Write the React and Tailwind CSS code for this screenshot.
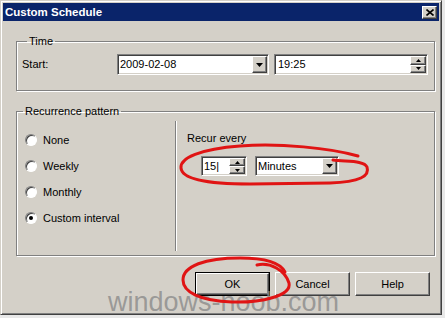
import React from 'react';

const raised = "border border-t-white border-l-white border-r-[#404040] border-b-[#404040] shadow-[inset_-1px_-1px_0_#808080]";
const sunken = "border border-t-[#808080] border-l-[#808080] border-r-white border-b-white shadow-[inset_1px_1px_0_#404040,inset_-1px_-1px_0_#d4d0c8]";
const etched = "border border-[#808080] shadow-[1px_1px_0_#fff,inset_1px_1px_0_#fff]";

const DownArrow = () => (
    <svg width="7" height="4" viewBox="0 0 7 4"><path d="M0 0h7L3.5 4z" fill="#000" /></svg>
);

const Spin = () => (
    <div className="flex flex-col w-[16px] h-full">
        <div className={`flex-1 flex items-center justify-center bg-[#d4d0c8] ${raised}`}>
            <svg width="5" height="3" viewBox="0 0 5 3"><path d="M2.5 0L5 3H0z" fill="#000" /></svg>
        </div>
        <div className={`flex-1 flex items-center justify-center bg-[#d4d0c8] ${raised}`}>
            <svg width="5" height="3" viewBox="0 0 5 3"><path d="M0 0h5L2.5 3z" fill="#000" /></svg>
        </div>
    </div>
);

const Combo = ({ value, className }) => (
    <div className={`flex bg-white p-px ${sunken} ${className}`}>
        <span className="flex-1 flex items-center pl-px">{value}</span>
        <div className={`w-[15px] h-full flex items-center justify-center bg-[#d4d0c8] ${raised}`}>
            <DownArrow />
        </div>
    </div>
);

const Radio = ({ label, checked }) => (
    <div className="h-[26px] flex items-center">
        <div className="w-[12px] h-[12px] rounded-full bg-white border border-t-[#808080] border-l-[#808080] border-r-white border-b-white shadow-[inset_1px_1px_0_#404040] flex items-center justify-center">
            {checked && <div className="w-[4px] h-[4px] rounded-full bg-black" />}
        </div>
        <span className="ml-[6px]">{label}</span>
    </div>
);

export default function App() {
    return (
        <div className="relative w-[445px] h-[318px] overflow-hidden bg-[#e8e8e8] font-['Liberation_Sans',Arial,sans-serif] text-[11px] leading-[13px] text-black">
            {/* Window */}
            <div className="w-[442px] h-[315px] bg-[#d4d0c8] border border-t-[#d4d0c8] border-l-[#d4d0c8] border-r-[#404040] border-b-[#404040] shadow-[inset_1px_1px_0_#fff,inset_-1px_-1px_0_#808080] p-[2px]">
                {/* Title bar */}
                <div className="h-[18px] bg-[#0a246a] flex items-center justify-between pl-[2px] pr-[2px]">
                    <span className="text-white font-bold text-[11.5px]">Custom Schedule</span>
                    <div className={`w-[15px] h-[13px] bg-[#d4d0c8] flex items-center justify-center ${raised}`}>
                        <svg width="8" height="7" viewBox="0 0 8 7">
                            <path d="M0.5 0.5L7.5 6.5M7.5 0.5L0.5 6.5" stroke="#000" strokeWidth="1.6" />
                        </svg>
                    </div>
                </div>

                {/* Time */}
                <fieldset className={`ml-[13px] mt-[14px] w-[419px] pl-[5px] pt-[6px] pb-[15px] ${etched}`}>
                    <legend className="ml-[5px] px-[2px]">Time</legend>
                    <div className="flex items-center">
                        <span className="w-[95px]">Start:</span>
                        <Combo value="2009-02-08" className="w-[152px] h-[21px]" />
                        <div className={`ml-[5px] w-[154px] h-[21px] flex bg-white p-px ${sunken}`}>
                            <span className="flex-1 flex items-center pl-[2px]">19:25</span>
                            <Spin />
                        </div>
                    </div>
                </fieldset>

                {/* Recurrence pattern */}
                <fieldset className={`ml-[13px] mt-[14px] w-[419px] pt-[3px] pb-[4px] ${etched}`}>
                    <legend className="ml-[6px] px-[2px]">Recurrence pattern</legend>
                    <div className="flex h-[130px]">
                        <div className="w-[158px] pl-[8px] pt-[6px]">
                            <Radio label="None" />
                            <Radio label="Weekly" />
                            <Radio label="Monthly" />
                            <Radio label="Custom interval" checked />
                        </div>
                        <div className="w-[2px] h-full border-l border-l-[#808080] border-r border-r-white" />
                        <div className="pl-[10px] pt-[11px]">
                            <p>Recur every</p>
                            <div className="flex mt-[11px] ml-[14px]">
                                <div className={`w-[46px] h-[20px] flex bg-white p-px ${sunken}`}>
                                    <span className="flex-1 flex items-center pl-px">15|</span>
                                    <Spin />
                                </div>
                                <Combo value="Minutes" className="ml-[8px] w-[84px] h-[20px]" />
                            </div>
                        </div>
                    </div>
                </fieldset>

                {/* Buttons */}
                <div className="flex justify-end gap-[5px] mt-[16px] pr-[9px]">
                    <button className="w-[75px] h-[24px] border border-black bg-[#d4d0c8]">
                        <div className={`w-full h-full flex items-center justify-center ${raised}`}>OK</div>
                    </button>
                    <button className={`w-[75px] h-[24px] bg-[#d4d0c8] ${raised}`}>Cancel</button>
                    <button className={`w-[75px] h-[24px] bg-[#d4d0c8] ${raised}`}>Help</button>
                </div>
            </div>

            {/* Watermark */}
            <div className="absolute left-[108px] top-[289px] text-[27px] leading-[27px] text-[#8a8a8a]/80 whitespace-nowrap pointer-events-none">
                windows-noob.com
            </div>

            {/* Red pen marks */}
            <svg className="absolute inset-0 pointer-events-none" width="445" height="318" viewBox="0 0 445 318">
                <path
                    d="M358 156 C330 148 280 143 240 146 C200 149 180 158 181 168 C182 180 210 184 250 184 L330 183 C360 182 370 176 367 167 C364 160 345 162 333 160"
                    fill="none" stroke="#e01414" strokeWidth="3" strokeLinecap="round"
                />
                <path
                    d="M257 265 C270 262 285 270 289 283 C292 296 260 303 232 302 C200 301 183 292 183 280 C183 266 205 258 240 258 C262 258 280 262 285 272"
                    fill="none" stroke="#e01414" strokeWidth="3" strokeLinecap="round"
                />
            </svg>
        </div>
    );
}
